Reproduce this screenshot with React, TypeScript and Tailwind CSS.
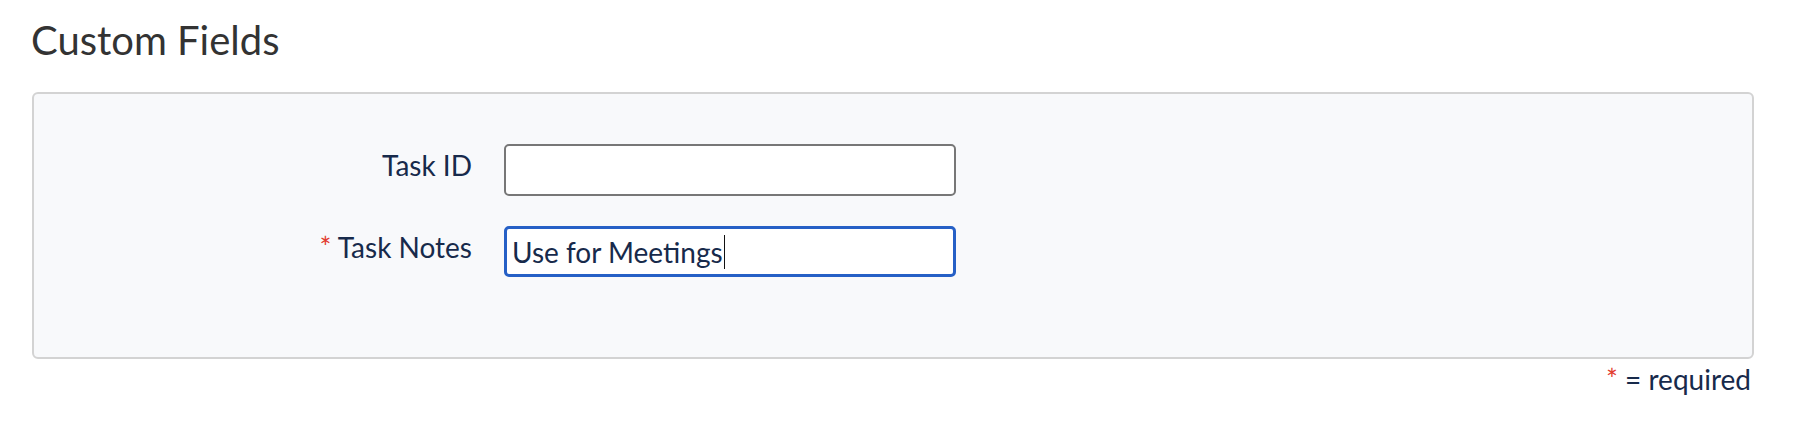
import React from "react";

export default function App() {
  return (
    <div
      className="w-[1808px] h-[422px] bg-white overflow-hidden"
      style={{ fontFamily: "Lato, 'Open Sans', sans-serif" }}
    >
      <div className="pl-[31px] pt-[20px]">
        <h1 className="text-[40px] leading-[40px] font-normal text-[#333333]">Custom Fields</h1>
      </div>
      <div className="ml-[32px] mt-[32px] w-[1722px] h-[267px] rounded-[6px] border-2 border-[#d3d3d3] bg-[#f8f9fb] pt-[50px]">
        <div className="flex flex-col gap-[30px]">
          <div className="flex items-start">
            <div className="w-[438px] pt-[7px] text-right text-[28px] leading-[28px] text-[#172a4b]">Task ID</div>
            <div className="ml-[32px] w-[452px] h-[52px] rounded-[5px] border-2 border-[#777777] bg-white"></div>
          </div>
          <div className="flex items-start">
            <div className="w-[438px] pt-[7px] text-right text-[28px] leading-[28px] text-[#172a4b]">
              <span className="text-[#e23b2e]">*</span> Task Notes
            </div>
            <div className="ml-[32px] w-[452px] h-[51px] rounded-[5px] border-[3px] border-[#2660c6] bg-white flex items-center pl-[5px] text-[28px] leading-[28px] text-[#172a4b]">
              <span>Use for Meetings</span>
              <span className="inline-block w-[1.5px] h-[34px] bg-[#111111] ml-[1px]"></span>
            </div>
          </div>
        </div>
      </div>
      <div className="w-[1751px] pt-[6px] text-right text-[28px] leading-[28px] text-[#172a4b]">
        <span className="text-[#e23b2e]">*</span> = required
      </div>
    </div>
  );
}
